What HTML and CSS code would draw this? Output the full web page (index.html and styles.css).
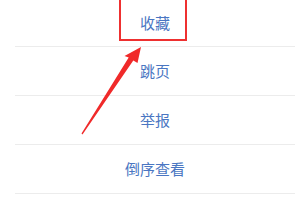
FILE: index.html
```html
<!DOCTYPE html>
<html lang="zh-CN">
<head>
  <meta charset="UTF-8" />
  <title>菜单</title>
  <link rel="stylesheet" href="styles.css">
</head>
<body>
  <div class="menu">
    <div class="item first">收藏</div>
    <div class="item">跳页</div>
    <div class="item">举报</div>
    <div class="item">倒序查看</div>
  </div>

  <!-- annotation overlay -->
  <div class="mark-box"></div>
  <svg class="arrow" width="300" height="204" viewBox="0 0 300 204">
    <polygon points="141,47 137.5,63 133.3,60.5 82.5,134.5 81.5,133.5 128.7,57.5 124.5,56" fill="#f02a2a" />
  </svg>
</body>
</html>
```

FILE: styles.css
```css
body {
  margin: 0;
  width: 300px;
  height: 204px;
  overflow: hidden;
  background: #ffffff;
  font-family: "Noto Sans CJK SC", "Noto Sans", sans-serif;
  position: relative;
}
.menu {
  padding: 0 5px 0 15px;
}
.item {
  height: 48px;
  line-height: 48px;
  text-align: center;
  font-size: 15px;
  color: #4a76c2;
  border-bottom: 1px solid #ececec;
}
.item.first {
  height: 46px;
  line-height: 46px;
}
.mark-box {
  position: absolute;
  left: 119px;
  top: -10px;
  width: 64px;
  height: 47px;
  border: 2px solid #ee3030;
}
.arrow {
  position: absolute;
  left: 0;
  top: 0;
}
```
